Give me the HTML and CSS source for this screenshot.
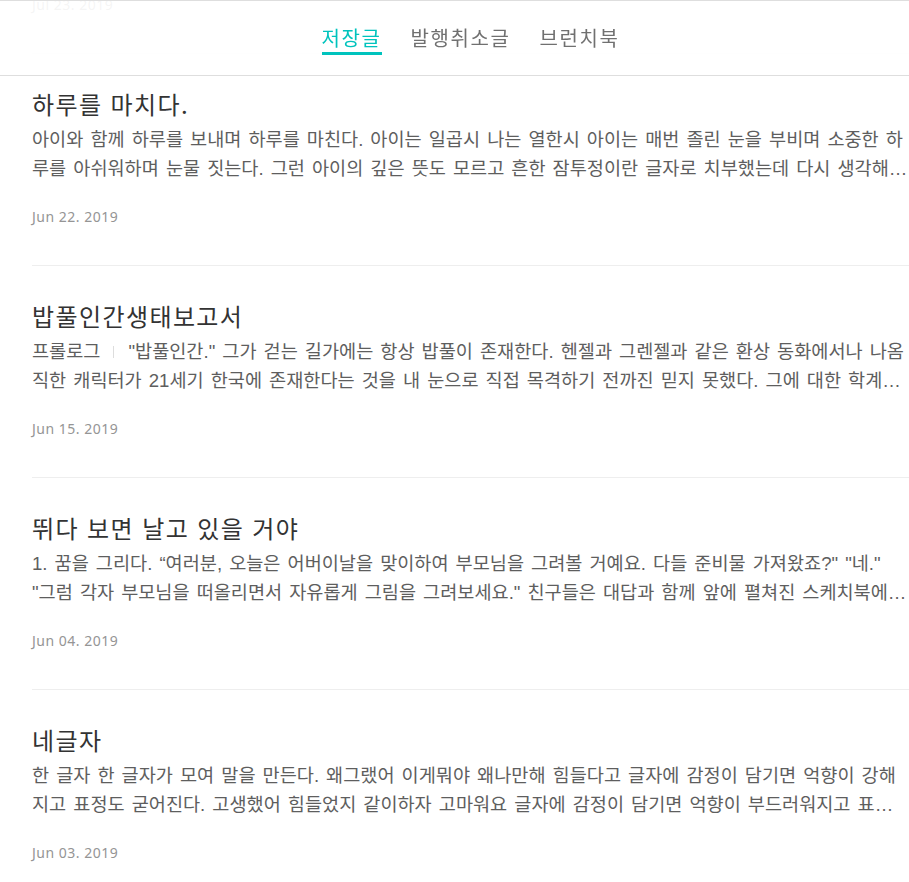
FILE: index.html
```html
<!DOCTYPE html>
<html lang="ko">
<head>
    <meta charset="UTF-8">
    <link rel="stylesheet" href="styles.css">
</head>
<body>

    <div class="tabbar">
        <a class="tab on">저장글</a>
        <a class="tab">발행취소글</a>
        <a class="tab">브런치북</a>
    </div>

    <ul class="list">
        <li class="item cut">
            <p class="date">Jul 23. 2019</p>
        </li>
        <li class="item">
            <h2 class="title">하루를 마치다.</h2>
            <p class="text">아이와 함께 하루를 보내며 하루를 마친다. 아이는 일곱시 나는 열한시 아이는 매번 졸린 눈을 부비며 소중한 하루를 아쉬워하며 눈물 짓는다. 그런 아이의 깊은 뜻도 모르고 흔한 잠투정이란 글자로 치부했는데 다시 생각해보니 아이는 하루가 끝나는 것이 그저 아쉬웠던 것이다.</p>
            <p class="date">Jun 22. 2019</p>
        </li>
        <li class="item">
            <h2 class="title">밥풀인간생태보고서</h2>
            <p class="text">프롤로그<span class="sep"></span>"밥풀인간." 그가 걷는 길가에는 항상 밥풀이 존재한다. 헨젤과 그렌젤과 같은 환상 동화에서나 나옴직한 캐릭터가 21세기 한국에 존재한다는 것을 내 눈으로 직접 목격하기 전까진 믿지 못했다. 그에 대한 학계의 보고는 아직 없다.</p>
            <p class="date">Jun 15. 2019</p>
        </li>
        <li class="item">
            <h2 class="title">뛰다 보면 날고 있을 거야</h2>
            <p class="text">1. 꿈을 그리다. “여러분, 오늘은 어버이날을 맞이하여 부모님을 그려볼 거예요. 다들 준비물 가져왔죠?" "네." "그럼 각자 부모님을 떠올리면서 자유롭게 그림을 그려보세요." 친구들은 대답과 함께 앞에 펼쳐진 스케치북에 그림을 그리기 시작했다.</p>
            <p class="date">Jun 04. 2019</p>
        </li>
        <li class="item">
            <h2 class="title">네글자</h2>
            <p class="text">한 글자 한 글자가 모여 말을 만든다. 왜그랬어 이게뭐야 왜나만해 힘들다고 글자에 감정이 담기면 억향이 강해지고 표정도 굳어진다. 고생했어 힘들었지 같이하자 고마워요 글자에 감정이 담기면 억향이 부드러워지고 표정도 밝아진다.</p>
            <p class="date">Jun 03. 2019</p>
        </li>
    </ul>

</body>
</html>
```

FILE: styles.css
```css
        body {
            margin: 0;
            background: #fff;
            font-family: "Noto Sans CJK KR", "Noto Sans", sans-serif;
        }

        .tabbar {
            position: fixed;
            top: 0;
            left: 0;
            right: 0;
            z-index: 2;
            height: 52px;
            padding: 22px 0 0 32px;
            border-top: 1px solid #dedede;
            border-bottom: 1px solid #dedede;
            background: rgba(255, 255, 255, 0.9);
            display: flex;
            justify-content: center;
            gap: 29px;
        }

        .tab {
            font-size: 20px;
            line-height: 29px;
            height: 29px;
            letter-spacing: 1.6px;
            color: #707070;
            border-bottom: 3px solid transparent;
        }

        .tab.on {
            color: #00c3bd;
            border-bottom-color: #00c3bd;
        }

        .list {
            list-style: none;
            margin: -5px 0 0;
            padding: 0 0 0 32px;
        }

        .item {
            padding: 32px 0 38px;
            border-bottom: 1px solid #eee;
        }

        .item.cut {
            padding-top: 0;
        }

        .title {
            margin: 0;
            font-size: 24px;
            line-height: 36px;
            letter-spacing: 1.4px;
            font-weight: normal;
            color: #333;
        }

        .text {
            margin: 3px 0 0;
            font-family: "Liberation Sans", "Noto Sans CJK KR", sans-serif;
            font-size: 18.6px;
            line-height: 29px;
            word-spacing: 1.9px;
            color: #5e5e5e;
            overflow: hidden;
            display: -webkit-box;
            -webkit-line-clamp: 2;
            -webkit-box-orient: vertical;
        }

        .sep {
            display: inline-block;
            width: 0;
            height: 12px;
            margin: 0 14px 0 13px;
            border-left: 1px solid #ddd;
        }

        .date {
            margin: 24px 0 0;
            font-family: "Noto Sans", sans-serif;
            font-size: 14px;
            line-height: 20px;
            letter-spacing: 0.5px;
            color: #959595;
        }

        .item.cut .date {
            margin-top: 0;
        }
```
